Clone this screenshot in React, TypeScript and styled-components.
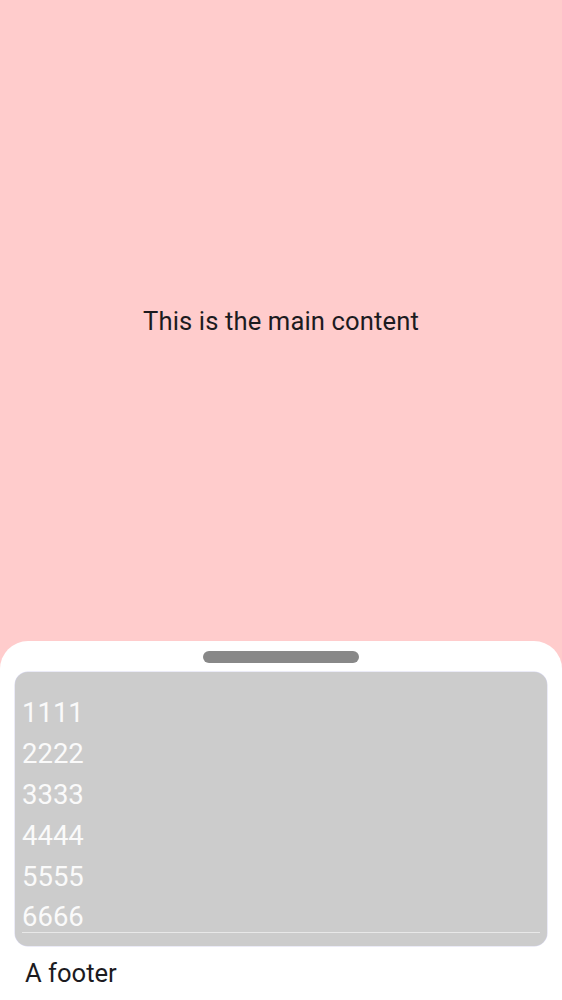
import React from "react";
import styled, { createGlobalStyle } from "styled-components";

const GlobalStyle = createGlobalStyle`
  html, body {
    margin: 0;
    padding: 0;
    height: 100%;
  }
  body {
    font-family: Roboto, "Liberation Sans", sans-serif;
    background: #ffcccc;
  }
`;

const items = ["1111", "2222", "3333", "4444", "5555", "6666"];

const App: React.FC = () => {
  return (
    <>
      <GlobalStyle />
      <Page>
        <Main>This is the main content</Main>
        <Sheet>
          <Handle />
          <ListBox>
            <Scroller>
              {items.map((item) => (
                <Row key={item}>{item}</Row>
              ))}
            </Scroller>
            <Divider />
          </ListBox>
          <Footer>A footer</Footer>
        </Sheet>
      </Page>
    </>
  );
};

export default App;

const Page = styled.div`
  display: flex;
  flex-direction: column;
  height: 100vh;
  background: #ffcccc;
`;

const Main = styled.main`
  height: 642px;
  display: flex;
  align-items: center;
  justify-content: center;
  font-size: 25.6px;
  letter-spacing: 0.12px;
  color: #1c1b1f;
`;

const Sheet = styled.section`
  flex: 1;
  display: flex;
  flex-direction: column;
  align-items: stretch;
  background: #ffffff;
  border-radius: 28px 28px 0 0;
  padding: 10px 15px 0;
`;

const Handle = styled.div`
  align-self: center;
  width: 156px;
  height: 12px;
  border-radius: 6px;
  background: #888888;
  margin-bottom: 9px;
`;

const ListBox = styled.div`
  display: flex;
  flex-direction: column;
  background: #cccccc;
  border-radius: 13px;
  padding: 0 7px 13px;
  box-shadow: 0 0 0 0.5px rgba(140, 140, 210, 0.35);
`;

const Scroller = styled.div`
  display: flex;
  flex-direction: column;
  padding-top: 20px;
`;

const Row = styled.div`
  height: 41px;
  line-height: 41px;
  font-size: 27.5px;
  color: #fafafa;

  &:last-child {
    height: 35px;
    line-height: 35px;
    padding-top: 2px;
    box-sizing: border-box;
  }
`;

const Divider = styled.div`
  height: 1px;
  background: #e8e8e8;
`;

const Footer = styled.footer`
  padding: 12px 10px;
  font-size: 25.6px;
  line-height: 30px;
  color: #1c1b1f;
`;
